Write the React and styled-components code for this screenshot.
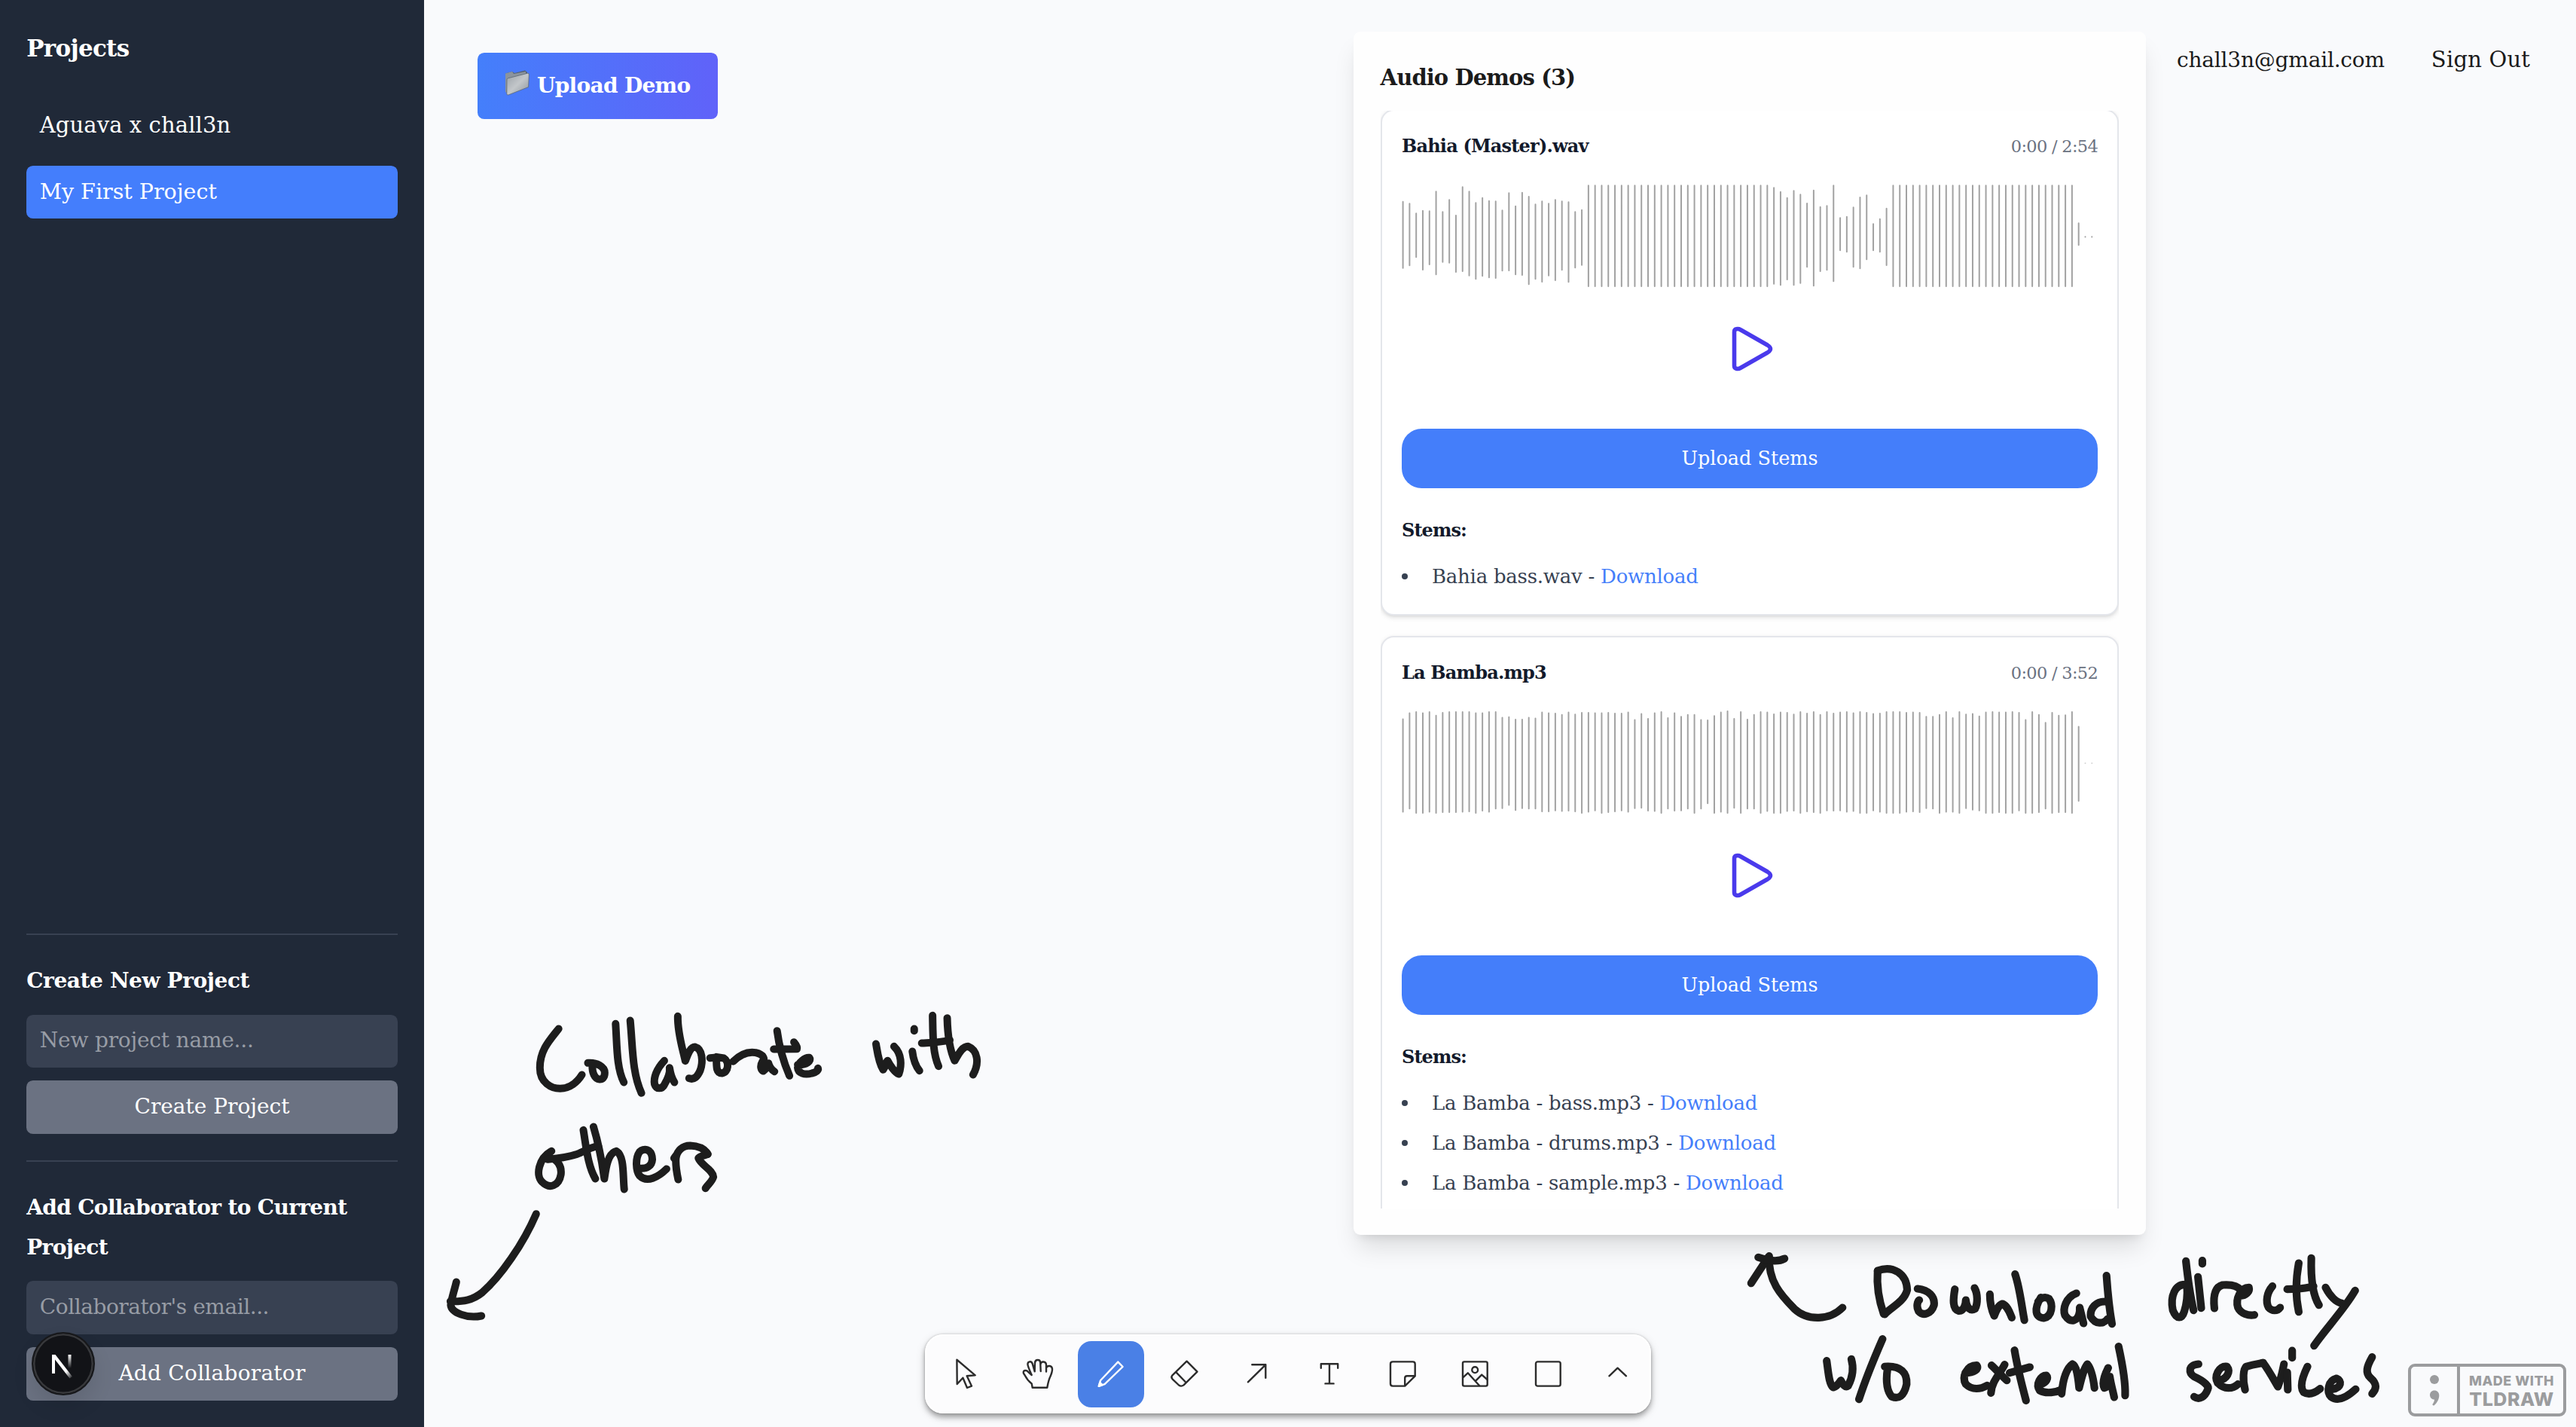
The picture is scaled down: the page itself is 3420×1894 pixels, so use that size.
import React from "react";
import styled, { createGlobalStyle, css } from "styled-components";

const Global = createGlobalStyle`
  * { box-sizing: border-box; margin: 0; padding: 0; }
  body {
    background: #f9fafc;
    color: #1b1b1b;
    font-family: "DejaVu Serif", serif;
    font-size: 28px;
    overflow: hidden;
  }
  button, input { font: inherit; color: inherit; border: 0; background: none; }
`;

const Page = styled.div`
  display: flex;
  width: 3420px;
  height: 1894px;
  overflow: hidden;
  position: relative;
`;

/* ---------- sidebar ---------- */

const Sidebar = styled.aside`
  width: 563px;
  flex: none;
  display: flex;
  flex-direction: column;
  padding: 35.2px;
  background: #202938;
  color: #fff;
  position: relative;
`;

const SidebarTitle = styled.h2`
  font-size: 31px;
  line-height: 58px;
  height: 61.6px;
  font-weight: 700;
  letter-spacing: -0.7px;
  margin-bottom: 35.2px;
`;

const ProjectList = styled.ul`
  list-style: none;
  flex: 1;
  display: flex;
  flex-direction: column;
  gap: 17.6px;
`;

const Project = styled.li`
  height: 70.4px;
  padding: 0 17.6px;
  line-height: 69px;
  border-radius: 8.8px;
  font-size: ${(p) => p.$size || 28}px;
  letter-spacing: ${(p) => p.$track || 0}px;
  background: ${(p) => (p.$active ? "#447efc" : "transparent")};
`;

const FormBlock = styled.form`
  display: flex;
  flex-direction: column;
  gap: 17.6px;
  border-top: 2px solid #384152;
  padding-top: 35.2px;
  margin-top: ${(p) => p.$gap || 0}px;
`;

const FormTitle = styled.h3`
  font-size: 28px;
  font-weight: 700;
  line-height: 52.8px;
  letter-spacing: ${(p) => p.$track || 0}px;
`;

const Field = styled.input`
  height: 70.4px;
  width: 100%;
  padding: 0 17.6px 3px;
  border-radius: 8.8px;
  background: #384152;
  letter-spacing: ${(p) => p.$track || 0}px;
  &::placeholder { color: #979ca5; opacity: 1; }
`;

const Submit = styled.button`
  height: 70.4px;
  padding-bottom: 3px;
  border-radius: 8.8px;
  background: #6b7282;
  color: #fff;
  letter-spacing: ${(p) => p.$track || 0}px;
`;

const DevBadge = styled.div`
  position: absolute;
  left: 42px;
  top: 1768px;
  width: 84px;
  height: 84px;
  border-radius: 50%;
  background: #121317;
  border: 2px solid #17181b;
  box-shadow: inset 0 0 0 2.5px #38393c, 0 14px 28px rgba(0, 0, 0, 0.1);
  display: grid;
  place-items: center;
`;

/* ---------- canvas ---------- */

const Canvas = styled.main`
  flex: 1;
  display: flex;
  flex-direction: column;
  background: #f9fafc;
`;

const Ink = styled.svg`
  position: absolute;
  left: 0;
  top: 0;
  width: 3420px;
  height: 1894px;
  pointer-events: none;
  path {
    fill: none;
    stroke: #1d1d1d;
    stroke-linecap: round;
    stroke-linejoin: round;
    vector-effect: non-scaling-stroke;
  }
`;

const TopRow = styled.div`
  display: flex;
  align-items: flex-start;
  height: 1771px;
  position: relative;
`;

const UploadDemo = styled.button`
  display: flex;
  align-items: center;
  gap: 9px;
  width: 319px;
  height: 88px;
  margin: 70px 0 0 71px;
  padding: 0 0 2px 36px;
  border-radius: 8.8px;
  background: linear-gradient(90deg, #447ffb, #6062f9);
  color: #fff;
  font-weight: 700;
  letter-spacing: -0.7px;
  white-space: nowrap;
  svg { margin-bottom: 6px; }
`;

const Panel = styled.section`
  width: 1052px;
  height: 1597px;
  margin: 42px 0 0 844px;
  padding: 35px 35.6px;
  display: flex;
  flex-direction: column;
  border-radius: 9px;
  background: #fefefe;
  box-shadow: 0 22px 33px -6.6px rgba(0, 0, 0, 0.12), 0 8.8px 13.2px -8.8px rgba(0, 0, 0, 0.12);
`;

const PanelTitle = styled.h3`
  height: 70px;
  line-height: 52px;
  font-size: 29px;
  font-weight: 700;
  letter-spacing: -0.9px;
`;

const Scroller = styled.div`
  flex: 1;
  min-height: 0;
  overflow: hidden;
  display: flex;
  flex-direction: column;
  gap: 27px;
`;

const Card = styled.article`
  flex: none;
  border: 2px solid #e4e6eb;
  border-radius: 17.6px;
  padding: 26.4px 26.4px;
  margin-top: ${(p) => (p.$first ? -2 : 0)}px;
  background: #fff;
  box-shadow: 0 2.2px 6.6px rgba(0, 0, 0, 0.1), 0 2.2px 4.4px -2.2px rgba(0, 0, 0, 0.1);
`;

const CardHead = styled.header`
  display: flex;
  justify-content: space-between;
  align-items: baseline;
  height: 44px;
  line-height: 41px;
  margin-bottom: 26px;
`;

const TrackName = styled.h4`
  font-size: 24px;
  font-weight: 700;
  color: #131a2b;
  letter-spacing: -0.8px;
`;

const Time = styled.span`
  font-size: 22.5px;
  color: #6b7282;
  letter-spacing: -0.7px;
`;

const Wave = styled.svg`
  display: block;
  width: 924px;
  height: 141px;
  path { stroke: #a2a2a2; stroke-width: 2; stroke-linecap: round; fill: none; }
`;

const PlayRow = styled.div`
  height: 157px;
  margin-bottom: 28px;
  padding-left: 5px;
  display: grid;
  place-items: center;
`;

const UploadStems = styled.button`
  display: block;
  width: 100%;
  height: 79px;
  padding-bottom: 2px;
  border-radius: 26.4px;
  background: #447efa;
  color: #fff;
  font-size: 25.5px;
`;

const StemsTitle = styled.h5`
  margin: 33px 0 16px;
  font-size: 24px;
  line-height: 45px;
  font-weight: 700;
  color: #131a2b;
  letter-spacing: -0.9px;
`;

const StemList = styled.ul`
  list-style: none;
  font-size: 26px;
  color: #374151;
`;

const Stem = styled.li`
  display: flex;
  align-items: center;
  height: 46.2px;
  white-space: pre;
  letter-spacing: -0.25px;
  & + & { margin-top: 6.6px; }
  &::before {
    content: "";
    width: 8px;
    height: 8px;
    border-radius: 50%;
    background: #374151;
    margin-right: 32px;
  }
`;

const Download = styled.a`
  color: #447efa;
`;

const Account = styled.nav`
  display: flex;
  align-items: baseline;
  margin: 53px 0 0 41px;
  line-height: 52px;
  gap: 62px;
  white-space: nowrap;
`;

const AccountItem = styled.span`
  font-size: ${(p) => p.$size || 28}px;
  letter-spacing: ${(p) => p.$track || 0}px;
`;

const BottomRow = styled.div`
  display: flex;
  align-items: flex-start;
  position: relative;
`;

const Toolbar = styled.div`
  display: flex;
  align-items: center;
  width: 964px;
  height: 105px;
  margin-left: 665px;
  padding-left: 5.3px;
  border-radius: 24px;
  background: #fcfcfd;
  box-shadow: inset 0 0 0 2px #fff, 0 0 3px rgba(0, 0, 0, 0.22), 0 5px 7px rgba(0, 0, 0, 0.3),
    0 4px 14px rgba(0, 0, 0, 0.12);
`;

const Tool = styled.button`
  flex: none;
  display: grid;
  place-items: center;
  width: 88px;
  height: 88px;
  margin: 0 ${(p) => (p.$last ? 0 : 4.35)}px;
  border-radius: 18px;
  color: #2c2c2c;
  ${(p) => p.$active && css`background: #4a80e6; color: #fff;`}
  svg {
    width: 60px;
    height: 60px;
    fill: none;
    stroke: currentColor;
    stroke-width: 2.4;
    stroke-linecap: round;
    stroke-linejoin: round;
  }
`;

const MadeWith = styled.a`
  display: flex;
  width: 210px;
  height: 70px;
  margin: 39px 13px 0 auto;
  border: 4px solid #9b9c9e;
  border-radius: 9px;
  color: #9b9c9e;
`;

const MadeMark = styled.span`
  width: 65px;
  border-right: 4px solid #9b9c9e;
  display: grid;
  place-items: center;
`;

const MadeText = styled.span`
  flex: 1;
  display: flex;
  flex-direction: column;
  align-items: center;
  justify-content: center;
  padding-top: 2px;
  font-family: Inter, "Open Sans", sans-serif;
  font-weight: 800;
  white-space: nowrap;
`;

const MadeLine = styled.span`
  font-size: ${(p) => p.$size}px;
  line-height: ${(p) => p.$line}px;
  letter-spacing: ${(p) => p.$track || 0}px;
`;

/* ---------- wave data: [top, bottom] of each bar ---------- */

const fill = (n, v) => Array.from({ length: n }, () => v);

const BAHIA = {
  axis: 849,
  unit: 1 / 3,
  bars: [
    [710, 980], [718, 970], [757, 937], [746, 987], [748, 966], [670, 1006], [751, 956], [703, 959],
    [765, 996], [652, 993], [670, 1010], [715, 1024], [695, 1012], [707, 1018], [709, 1020], [745, 991],
    [676, 990], [728, 1006], [674, 1008], [690, 1045], [721, 1024], [709, 1035], [718, 1010], [703, 1029],
    [709, 988], [712, 1036], [751, 979], [743, 968],
    ...fill(28, [646, 1053]),
    [655, 1043], [671, 1048], [695, 1026], [667, 1048], [682, 1040], [717, 976], [665, 1051], [731, 993],
    [727, 988], [646, 1033], [775, 910], [770, 916], [733, 976], [693, 982], [685, 946], [799, 910],
    [779, 916], [737, 969],
    ...fill(28, [646, 1053]),
    [796, 889], [850, 855], [850, 855],
  ],
};

const BAMBA_TOPS = [
  72, 55, 52, 55, 52, 62, 54, 52, 52, 52, 52, 55, 55, 52, 52, 68, 66, 73, 73, 68, 70, 53, 55, 56, 60, 53,
  59, 54, 54, 55, 55, 54, 56, 56, 53, 74, 57, 71, 55, 52, 69, 55, 65, 60, 60, 74, 75, 63, 53, 50, 71, 52,
  73, 60, 52, 53, 58, 53, 54, 59, 52, 56, 52, 60, 52, 56, 53, 52, 55, 52, 54, 57, 56, 52, 52, 52, 54, 53,
  54, 65, 65, 60, 52, 69, 52, 59, 57, 64, 53, 52, 53, 53, 52, 54, 74, 52, 60, 82, 54, 62, 61, 52, 93, 196, 196,
];
const BAMBA_BOTTOMS = [
  337, 328, 340, 340, 337, 340, 338, 338, 338, 337, 336, 340, 334, 337, 328, 327, 318, 332, 327, 328, 328,
  336, 336, 333, 335, 334, 336, 340, 337, 333, 340, 338, 336, 333, 337, 327, 326, 334, 335, 340, 328, 334,
  333, 328, 340, 328, 313, 340, 337, 340, 326, 340, 328, 328, 340, 335, 340, 340, 335, 334, 340, 336, 338,
  340, 333, 334, 333, 337, 335, 340, 340, 333, 337, 340, 340, 340, 337, 336, 338, 327, 328, 340, 337, 337,
  340, 327, 331, 333, 340, 340, 338, 340, 340, 333, 340, 340, 338, 328, 340, 338, 338, 340, 306, 198, 198,
];
const BAMBA = { axis: 196, unit: 1 / 2.119, bars: BAMBA_TOPS.map((t, i) => [t, BAMBA_BOTTOMS[i]]) };

const TRAIL_START = 103;

function WaveForm({ wave, trailOpacity }) {
  const segment = ([t, b], i) => {
    const x = 1.6 + i * 8.795;
    const y1 = 70 + (t - wave.axis) * wave.unit + 1;
    const y2 = 70 + (b - wave.axis) * wave.unit - 1;
    return `M${x.toFixed(2)} ${y1.toFixed(1)}V${Math.max(y2, y1 + 0.1).toFixed(1)}`;
  };
  const parts = wave.bars.map(segment);
  return (
    <Wave viewBox="0 0 924 141">
      <path d={parts.slice(0, TRAIL_START).join("")} />
      <path d={parts.slice(TRAIL_START).join("")} opacity={trailOpacity} />
    </Wave>
  );
}

const DEMOS = [
  {
    name: "Bahia (Master).wav",
    time: "0:00 / 2:54",
    wave: BAHIA,
    trailOpacity: 1,
    stems: ["Bahia bass.wav"],
  },
  {
    name: "La Bamba.mp3",
    time: "0:00 / 3:52",
    wave: BAMBA,
    trailOpacity: 0.45,
    stems: ["La Bamba - bass.mp3", "La Bamba - drums.mp3", "La Bamba - sample.mp3"],
  },
];

function DemoCard({ demo, first }) {
  return (
    <Card $first={first}>
      <CardHead>
        <TrackName>{demo.name}</TrackName>
        <Time>{demo.time}</Time>
      </CardHead>
      <WaveForm wave={demo.wave} trailOpacity={demo.trailOpacity} />
      <PlayRow>
        <svg width="72" height="72" viewBox="0 0 72 72" fill="none" stroke="#4a3aec" strokeWidth="5.6" strokeLinejoin="round">
          <path d="M12.5 13.5 Q12.5 10.5 15.2 9.8 Q18 9 20.5 10.5 L56.5 31 Q60.5 33.5 60.5 36 Q60.5 38.5 56.5 41 L20.5 61.5 Q18 63 15.2 62.2 Q12.5 61.5 12.5 58.5 Z" />
        </svg>
      </PlayRow>
      <UploadStems>Upload Stems</UploadStems>
      <StemsTitle>Stems:</StemsTitle>
      <StemList>
        {demo.stems.map((name) => (
          <Stem key={name}>
            {name + " - "}
            <Download>Download</Download>
          </Stem>
        ))}
      </StemList>
    </Card>
  );
}

const TOOLS = [
  ["select", <path d="M18.4 10.7L42.7 31.3L31.7 32.3L38 45.7L32 48L26.4 34.7L18.7 43Z" />],
  [
    "hand",
    <path d="M22.7 47.7L21.7 42.5C17 39 14.5 35 12.7 31.5C11.5 29.5 10.5 28.8 10.7 27.3C11 24.5 15 24.3 17 26.8L21.7 31C19.8 26.5 16.6 20 16.4 16.8C16.4 12.4 21.3 12.3 22.6 15.7L25.7 26.3M25.7 26.3L26 14.8C26.4 9.8 32.8 9.8 33.2 14.3L33.7 26M33.5 16.6C34.2 12.2 40.8 12.6 41 17.4L41 26.6M41.2 21.5C42.4 17.8 48.6 18 49 22.8C49.2 26.5 48 29.5 46.3 33.3C44 38 43.4 42 42.3 47.7H22.7" />,
  ],
  [
    "draw",
    <>
      <path d="M13.8 45.8L16 38.3L39.3 13.6L45.6 20L21.6 43.2Z" />
      <path d="M13.8 45.8L15.3 41L18.5 44.2Z" fill="currentColor" />
    </>,
  ],
  [
    "eraser",
    <path d="M33.6 12.7L47.5 26.7L29.5 44.4Q26.3 46.8 23.1 44.5L14.5 36.3Q12.3 33.8 14.5 31.3ZM19.5 27.4L32.6 41" />,
  ],
  ["arrow", <path d="M18.9 40.3L42.3 17.3M24.3 17.3H42.3V34.7" />],
  ["text", <path d="M18.8 21.8V16.2H41.2V21.8M30 16.2V42.4M24.5 42.4H35.6" />],
  [
    "note",
    <path d="M33.2 45.6H17Q14 45.6 14 42.6V16.4Q14 13.4 17 13.4H43.7Q46.7 13.4 46.7 16.4V32.4L33.2 45.6V35Q33.2 32.2 36 32.2H46.5" />,
  ],
  [
    "image",
    <>
      <rect x="14" y="13.4" width="32.7" height="32.2" rx="2" />
      <circle cx="30.2" cy="24.2" r="3.9" />
      <path d="M14.2 34.3L20.8 28.3L36 45M31.5 38.4L39.2 30.6L46.5 37" />
    </>,
  ],
  ["shape", <rect x="14" y="13.4" width="32.7" height="32.2" rx="2.4" />],
];

/* Pen strokes on the board, grouped by note. */
const NOTE_A = [
  "M324 135C300 180 274 220 274 290C274 350 305 373 328 373C355 373 375 345 386 318",
  "M402 271C425 268 447 285 447 310C447 330 440 337 433 336C420 335 413 310 414 278",
  "M476 115C480 200 478 290 498 348",
  "M515 102C522 210 520 310 545 391",
  "M606 262C585 295 577 330 580 355C585 378 600 375 606 358C615 335 622 310 620 290C622 310 625 330 633 348",
  "M642 85C641 150 655 215 662 263C668 240 675 207 688 207C708 215 710 265 702 300C695 325 685 340 672 332",
  "M728 251L745 249C745 290 745 312 760 312C778 308 780 265 765 252L745 247",
  "M790 265C810 235 830 225 850 230C872 238 875 255 868 265C860 285 865 300 870 303C878 295 883 280 884 272C886 285 893 300 900 305",
  "M907 143C912 200 925 270 940 322",
  "M898 216L960 215C962 208 956 195 952 188",
  "M962 278C985 280 1000 262 993 250C982 248 964 268 962 290C963 312 980 320 1000 312C1012 308 1018 300 1016 292",
  "M1171 195C1175 230 1178 270 1190 298C1197 285 1198 265 1202 262C1208 280 1222 310 1232 315C1240 280 1240 235 1219 205",
  "M1268 225C1270 250 1275 280 1287 302",
  "M1273 135L1273 143",
  "M1322 82C1323 160 1322 230 1338 284",
  "M1293 192C1315 190 1340 190 1368 180",
  "M1361 92C1362 150 1368 220 1381 262C1390 240 1400 205 1417 205C1442 220 1448 270 1430 318",
  "M305 622C270 650 262 720 280 745C300 775 325 760 330 715C333 680 320 655 300 648",
  "M295 655C330 650 365 640 380 630C400 615 415 605 430 602",
  "M390 538C398 610 402 680 422 732",
  "M417 525C430 590 440 665 446 732C450 690 455 630 478 622C500 640 495 720 499 774",
  "M537 690C560 695 573 680 574 655C573 610 550 610 540 625C528 650 530 700 540 720C560 750 590 725 612 693",
  "M643 735C638 700 636 670 637 650C640 620 655 600 675 600C700 602 715 615 722 634",
  "M632 650L637 640",
  "M722 634C715 640 700 640 697 650C705 680 735 695 737 725C733 745 722 755 716 770",
  "M264 872C230 990 170 1120 120 1185C95 1215 70 1222 35 1220",
  "M51 1143C45 1180 38 1210 36 1235C38 1265 80 1290 118 1278",
];

const NOTE_B = [
  "M228 285C205 335 165 340 140 290C115 235 92 180 94 80",
  "M61 188L92 85",
  "M74 85C90 98 110 105 122 90",
  "M292 140C290 200 295 260 303 310",
  "M292 138C320 115 345 150 346 215C340 265 315 285 305 312",
  "M365 210C385 215 397 240 395 275C390 310 375 320 367 300C362 280 365 260 368 255",
  "M433 212C430 250 428 290 440 298C450 300 453 270 453 255C455 290 462 300 470 290C475 270 475 230 469 207",
  "M497 232C497 260 500 295 505 318C508 300 512 275 520 270C530 280 533 305 537 325",
  "M543 152C552 210 555 280 560 335",
  "M590 245C577 290 580 325 595 327C612 320 612 270 605 250C598 240 590 245 585 262",
  "M655 228C635 245 630 290 634 315C645 350 658 340 661 300L661 285L668 348",
  "M710 158C712 220 715 290 720 350",
  "M712 262C690 255 680 290 681 320C690 355 705 350 712 330",
  "M855 100C858 160 862 230 869 296",
  "M855 193C835 190 826 240 831 295C838 335 848 330 852 300C858 260 858 230 857 200",
  "M877 163L883 287",
  "M885 98L885 111",
  "M907 288C905 250 905 205 922 195C940 192 950 200 955 215",
  "M952 238C965 240 972 220 970 205C955 205 945 250 950 285C955 310 970 318 980 314",
  "M1013 200C1003 225 1000 260 1006 285C1012 300 1022 300 1027 285",
  "M1061 108C1055 180 1056 250 1061 302",
  "M1040 212C1060 212 1075 208 1088 200",
  "M1084 88C1083 160 1085 230 1098 275",
  "M1110 205C1118 240 1130 265 1140 268",
  "M1164 217C1145 290 1110 370 1089 437",
  "M199 497C202 540 203 590 211 603C217 600 222 585 225 575C228 590 233 605 238 597C247 560 248 520 244 490",
  "M301 410C285 490 270 570 258 650",
  "M305 520C335 515 346 545 345 590C340 640 330 650 318 640C306 610 308 560 310 530",
  "M452 545C468 545 478 530 473 515C455 515 445 560 453 590C465 615 480 610 492 595",
  "M500 515C510 535 520 560 528 575",
  "M524 512C515 550 500 580 499 625",
  "M542 455C547 520 555 590 563 655",
  "M533 545L570 522",
  "M590 590C600 585 605 565 600 555C590 555 580 590 588 615C600 630 618 622 628 612",
  "M628 628C630 580 635 530 648 510C655 515 658 560 660 605C665 560 668 530 675 510C683 530 686 570 688 605",
  "M713 525C705 560 702 590 706 605C715 600 716 570 716 560C718 590 722 620 724 642",
  "M732 440C738 500 745 580 744 635",
  "M878 510C858 515 860 545 870 560C890 580 898 600 895 610C890 640 880 655 870 640",
  "M915 575C930 570 937 540 930 520C915 515 906 560 913 585C925 612 940 610 950 590",
  "M963 612C958 570 960 530 965 520C980 510 990 508 996 505",
  "M996 505C1005 530 1015 570 1023 600C1030 560 1032 530 1034 510",
  "M1040 543L1041 612",
  "M1049 456L1049 485",
  "M1077 520C1068 560 1062 600 1070 622C1080 635 1092 622 1100 608",
  "M1122 610C1140 605 1140 575 1130 567C1115 575 1111 620 1120 640C1135 665 1155 630 1165 610",
  "M1195 482C1185 520 1182 545 1192 565C1205 590 1203 610 1195 628",
];

function Board() {
  return (
    <Ink viewBox="0 0 3420 1894">
      <g transform="translate(580.5 1320.5) scale(0.49745 0.33333)">
        {NOTE_A.map((d) => (
          <path key={d} d={d} strokeWidth="10" />
        ))}
      </g>
      <g transform="translate(2280.5 1640.5) scale(0.72704 0.33333)">
        {NOTE_B.map((d) => (
          <path key={d} d={d} strokeWidth="10.2" />
        ))}
      </g>
    </Ink>
  );
}

function Folder() {
  return (
    <svg width="34" height="34" viewBox="0 0 34 34">
      <defs>
        <linearGradient id="folderFront" x1="0" y1="0" x2="1" y2="1">
          <stop offset="0" stopColor="#9aa1a8" />
          <stop offset="0.5" stopColor="#c3c7ca" />
          <stop offset="1" stopColor="#8d949b" />
        </linearGradient>
      </defs>
      <path d="M1 4.5L10 2L13 4L27 0.5L30 3L29 8L2 30Z" fill="#56616e" />
      <path d="M1 4.5L10 2L12 5L28 2V6L4 12L2.5 30L1 29Z" fill="#8b949e" />
      <path d="M4.5 10.8L30.5 4.2Q32.5 4 32.3 6L31.6 22.5L5 33Q3 33.5 2.8 31.5L3 12.5Q3.1 11.2 4.5 10.8Z" fill="url(#folderFront)" stroke="#5c6773" strokeWidth="0.8" />
    </svg>
  );
}

export default function App() {
  return (
    <>
      <Global />
      <Page>
        <Sidebar>
          <SidebarTitle>Projects</SidebarTitle>
          <ProjectList>
            <Project $size={29} $track={0.1}>Aguava x chall3n</Project>
            <Project $active $size={28.5}>My First Project</Project>
          </ProjectList>
          <FormBlock>
            <FormTitle $track={-0.4}>Create New Project</FormTitle>
            <Field placeholder="New project name..." $track={-0.2} />
            <Submit type="button">Create Project</Submit>
          </FormBlock>
          <FormBlock $gap={35.2}>
            <FormTitle $track={-0.65}>Add Collaborator to Current Project</FormTitle>
            <Field placeholder="Collaborator's email..." $track={-0.45} />
            <Submit type="button" $track={0.25}>Add Collaborator</Submit>
          </FormBlock>
          <DevBadge>
            <svg width="80" height="80" viewBox="3 2 80 80">
              <defs>
                <linearGradient id="badgeDiag" x1="0" y1="0" x2="1" y2="1">
                  <stop offset="0.7" stopColor="#fff" />
                  <stop offset="1" stopColor="#fff" stopOpacity="0" />
                </linearGradient>
                <linearGradient id="badgeBar" x1="0" y1="0" x2="0" y2="1">
                  <stop offset="0" stopColor="#fff" />
                  <stop offset="1" stopColor="#fff" stopOpacity="0" />
                </linearGradient>
              </defs>
              <path d="M28 30H32.5L55 59L51.5 61.5L32 36.5V55H28Z" fill="url(#badgeDiag)" />
              <rect x="49.5" y="30" width="4" height="18" fill="url(#badgeBar)" />
            </svg>
          </DevBadge>
        </Sidebar>
        <Canvas>
          <Board />
          <TopRow>
            <UploadDemo>
              <Folder />
              Upload Demo
            </UploadDemo>
            <Panel>
              <PanelTitle>Audio Demos (3)</PanelTitle>
              <Scroller>
                {DEMOS.map((demo, i) => (
                  <DemoCard key={demo.name} demo={demo} first={i === 0} />
                ))}
              </Scroller>
            </Panel>
            <Account>
              <AccountItem $track={-0.2}>chall3n@gmail.com</AccountItem>
              <AccountItem $size={29} $track={0.2}>Sign Out</AccountItem>
            </Account>
          </TopRow>
          <BottomRow>
            <Toolbar>
              {TOOLS.map(([id, icon]) => (
                <Tool key={id} $active={id === "draw"}>
                  <svg viewBox="0 0 60 60">{icon}</svg>
                </Tool>
              ))}
              <Tool $last>
                <svg viewBox="0 0 60 60">
                  <path d="M19.4 32.3L30.6 21.7L42 32.3" />
                </svg>
              </Tool>
            </Toolbar>
            <MadeWith>
              <MadeMark>
                <svg width="20" height="48" viewBox="0 0 20 48" fill="#9b9c9e">
                  <circle cx="10" cy="10" r="6" />
                  <path d="M10 24.5C13.5 24.5 16.3 27 16.3 31C16.3 36 13.5 41.5 9 44.8L7.2 43.2C9 41 10 38.8 10 36.6C6.5 36.6 4 34 4 30.6C4 27 6.6 24.5 10 24.5Z" />
                </svg>
              </MadeMark>
              <MadeText>
                <MadeLine $size={18} $line={23} $track={0.5}>MADE WITH</MadeLine>
                <MadeLine $size={25} $line={27} $track={0.5}>TLDRAW</MadeLine>
              </MadeText>
            </MadeWith>
          </BottomRow>
        </Canvas>
      </Page>
    </>
  );
}
